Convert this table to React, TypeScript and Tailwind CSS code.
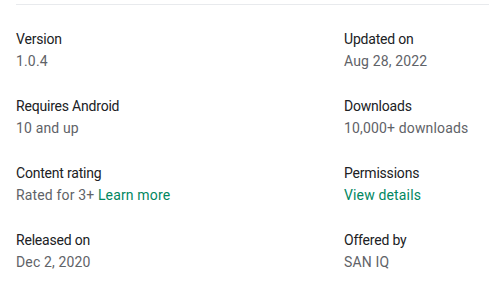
const items = [
    { label: 'Version', value: '1.0.4' },
    { label: 'Updated on', value: 'Aug 28, 2022' },
    { label: 'Requires Android', value: '10 and up' },
    { label: 'Downloads', value: '10,000+ downloads' },
    { label: 'Content rating', value: 'Rated for 3+', link: 'Learn more' },
    { label: 'Permissions', link: 'View details' },
    { label: 'Released on', value: 'Dec 2, 2020' },
    { label: 'Offered by', value: 'SAN IQ' },
]

export default function App() {
    return (
        <div className="h-[290px] w-[489px] overflow-hidden bg-white pt-1 font-['Roboto',sans-serif]">
            <div className="ml-4 w-[700px] border-t border-[#e8eaed] pt-6">
                <div className="grid grid-cols-[328px_328px] gap-y-[25px]">
                    {items.map((item) => (
                        <div key={item.label}>
                            <div className="text-sm leading-5 tracking-[-0.2px] text-[#202124]">{item.label}</div>
                            <div className="mt-0.5 text-sm leading-5 tracking-[0.15px] text-[#5f6368]">
                                {item.value}
                                {item.value && item.link && ' '}
                                {item.link && <span className="text-[#01875f]">{item.link}</span>}
                            </div>
                        </div>
                    ))}
                </div>
            </div>
        </div>
    )
}
